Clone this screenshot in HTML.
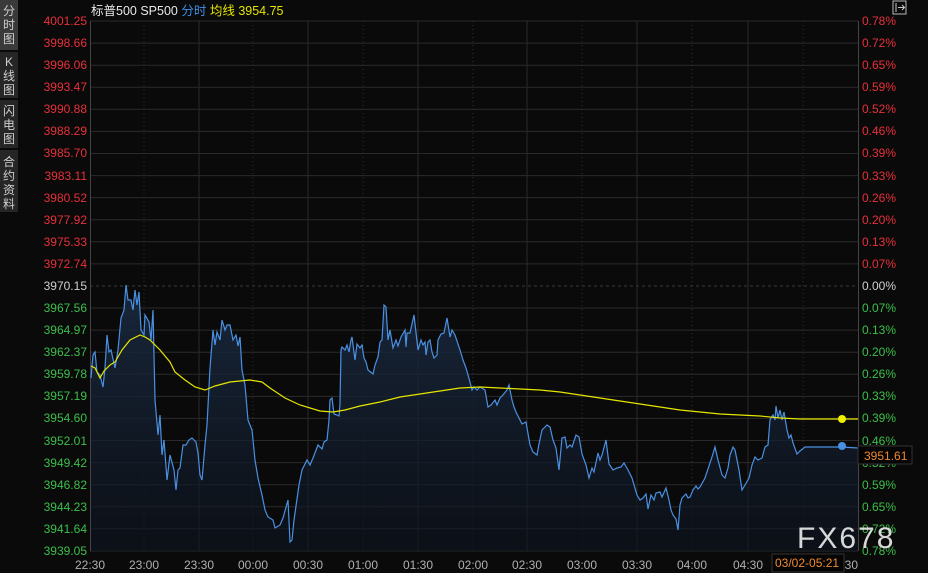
<!DOCTYPE html>
<html><head><meta charset="utf-8"><style>
html,body{margin:0;padding:0;background:#0a0a0a;width:928px;height:573px;overflow:hidden}
body{font-family:"Liberation Sans","Noto Sans CJK SC",sans-serif}
.sb{position:absolute;left:0;width:18px;background:#262626;color:#cfcfcf;font-size:12px;line-height:14px;text-align:center}
</style></head><body>
<div class="sb" style="top:0;height:50px;background:#3a3a3a;padding-top:4px;box-sizing:border-box">分<br>时<br>图</div>
<div class="sb" style="top:52px;height:46px;padding-top:3px;box-sizing:border-box">K<br>线<br>图</div>
<div class="sb" style="top:100px;height:48px;padding-top:4px;box-sizing:border-box">闪<br>电<br>图</div>
<div class="sb" style="top:150px;height:62px;padding-top:5px;box-sizing:border-box">合<br>约<br>资<br>料</div>
<svg width="928" height="573" style="position:absolute;left:0;top:0" font-family="Liberation Sans, Noto Sans CJK SC, sans-serif">
<defs><linearGradient id="g" x1="0" y1="0" x2="0" y2="1"><stop offset="0" stop-color="#1a2a40" stop-opacity="0.9"/><stop offset="1" stop-color="#0d1420" stop-opacity="0.6"/></linearGradient></defs>
<text x="91" y="15" font-size="12.5" fill="#e8e8e8">标普500 SP500 <tspan fill="#3d8fe6">分时</tspan> <tspan fill="#e6e600">均线  3954.75</tspan></text>
<rect x="893" y="1" width="13" height="13" fill="none" stroke="#bbb"/><path d="M896 3v9M898 7.5h6M902 5l2.5 2.5-2.5 2.5" stroke="#ccc" fill="none"/>
<g stroke="#2a2a2a" stroke-width="1">
<path d="M90 21H858M90 43.1H858M90 65.2H858M90 87.2H858M90 109.3H858M90 131.4H858M90 153.5H858M90 175.6H858M90 197.6H858M90 219.7H858M90 241.8H858M90 263.9H858M90 308H858M90 330.1H858M90 352.2H858M90 374.3H858M90 396.4H858M90 418.4H858M90 440.5H858M90 462.6H858M90 484.7H858M90 506.8H858M90 528.8H858M90 551H858"/>
<path d="M90 286H858" stroke-dasharray="3 3" stroke="#3a3a3a"/>
<path d="M199 21V551M308 21V551M418 21V551M527 21V551M637 21V551M748 21V551"/>
<path d="M144 21V551M253 21V551M363 21V551M473 21V551M582 21V551M692 21V551M803 21V551" stroke-dasharray="1 3" stroke="#333"/>
<path d="M90.5 21V551M858.5 21V551" stroke="#444"/>
</g>
<polygon fill="url(#g)" points="91,551 91,378 93,355 95,352 97,372 100,375 103,387 105,368 107,335 109,352 111,350 115,368 118,350 121,318 124,310 126,285 128,300 131,300 133,310 135,290 137,305 139,292 141,330 144,335 145,315 149,322 151,340 153,310 155,400 158,435 160,415 162,455 164,440 167,480 170,455 174,470 176,490 178,470 180,468 183,445 186,445 189,440 192,438 194,440 196,442 198,453 200,475 202,480 205,445 207,425 210,368 213,330 215,345 217,332 220,340 222,320 225,330 227,325 230,325 233,340 236,335 238,346 240,337 242,370 245,385 248,420 252,430 255,460 258,478 262,495 265,510 268,517 273,520 275,528 280,525 283,518 288,500 290,542 292,540 294,520 299,485 302,470 307,460 310,465 313,458 318,445 322,449 324,442 327,440 329,420 330,400 332,398 334,414 337,415 339,416 340,404 341,350 342,347 345,350 347,345 349,352 351,340 352,337 355,360 357,344 360,348 362,345 364,358 366,362 368,370 373,374 375,365 378,357 380,342 382,340 384,305 386,307 388,340 390,330 393,348 396,340 398,346 401,337 405,330 406,347 407,333 410,333 414,315 418,350 421,340 423,345 425,342 426,355 428,342 430,340 432,352 434,358 437,355 438,340 441,334 444,333 447,318 450,337 452,330 455,335 460,350 463,360 466,368 470,382 472,390 474,387 477,390 480,387 485,390 488,407 491,405 495,400 497,405 500,398 503,395 507,390 509,385 512,400 514,407 516,412 519,418 522,424 526,422 530,445 533,452 537,455 539,444 542,430 547,425 550,427 553,440 556,448 559,470 562,438 565,437 567,448 570,445 572,447 576,435 579,437 582,454 586,465 589,478 592,468 594,472 598,453 600,460 602,455 606,440 609,464 613,470 617,468 621,467 624,463 628,470 632,478 637,495 640,500 643,498 646,494 648,509 651,495 654,500 656,493 660,492 662,497 666,488 669,500 671,510 673,515 676,519 678,530 680,505 682,498 686,494 688,498 690,497 693,490 696,486 698,489 700,487 705,478 712,457 715,447 718,460 722,475 725,478 728,468 730,455 733,447 735,450 739,470 742,490 745,485 749,478 752,465 755,457 758,460 762,458 765,447 768,445 770,420 773,415 775,420 776,406 778,418 780,410 782,420 784,412 787,430 789,438 791,435 793,443 797,454 800,451 805,447 842,447 858,448 858,551"/>
<polyline fill="none" stroke="#4a90e2" stroke-width="1.2" points="91,378 93,355 95,352 97,372 100,375 103,387 105,368 107,335 109,352 111,350 115,368 118,350 121,318 124,310 126,285 128,300 131,300 133,310 135,290 137,305 139,292 141,330 144,335 145,315 149,322 151,340 153,310 155,400 158,435 160,415 162,455 164,440 167,480 170,455 174,470 176,490 178,470 180,468 183,445 186,445 189,440 192,438 194,440 196,442 198,453 200,475 202,480 205,445 207,425 210,368 213,330 215,345 217,332 220,340 222,320 225,330 227,325 230,325 233,340 236,335 238,346 240,337 242,370 245,385 248,420 252,430 255,460 258,478 262,495 265,510 268,517 273,520 275,528 280,525 283,518 288,500 290,542 292,540 294,520 299,485 302,470 307,460 310,465 313,458 318,445 322,449 324,442 327,440 329,420 330,400 332,398 334,414 337,415 339,416 340,404 341,350 342,347 345,350 347,345 349,352 351,340 352,337 355,360 357,344 360,348 362,345 364,358 366,362 368,370 373,374 375,365 378,357 380,342 382,340 384,305 386,307 388,340 390,330 393,348 396,340 398,346 401,337 405,330 406,347 407,333 410,333 414,315 418,350 421,340 423,345 425,342 426,355 428,342 430,340 432,352 434,358 437,355 438,340 441,334 444,333 447,318 450,337 452,330 455,335 460,350 463,360 466,368 470,382 472,390 474,387 477,390 480,387 485,390 488,407 491,405 495,400 497,405 500,398 503,395 507,390 509,385 512,400 514,407 516,412 519,418 522,424 526,422 530,445 533,452 537,455 539,444 542,430 547,425 550,427 553,440 556,448 559,470 562,438 565,437 567,448 570,445 572,447 576,435 579,437 582,454 586,465 589,478 592,468 594,472 598,453 600,460 602,455 606,440 609,464 613,470 617,468 621,467 624,463 628,470 632,478 637,495 640,500 643,498 646,494 648,509 651,495 654,500 656,493 660,492 662,497 666,488 669,500 671,510 673,515 676,519 678,530 680,505 682,498 686,494 688,498 690,497 693,490 696,486 698,489 700,487 705,478 712,457 715,447 718,460 722,475 725,478 728,468 730,455 733,447 735,450 739,470 742,490 745,485 749,478 752,465 755,457 758,460 762,458 765,447 768,445 770,420 773,415 775,420 776,406 778,418 780,410 782,420 784,412 787,430 789,438 791,435 793,443 797,454 800,451 805,447 842,447 858,448"/>
<polyline fill="none" stroke="#e6e600" stroke-width="1.2" points="91,366 95,368 100,378 104,371 110,365 115,362 122,350 130,340 140,335 145,337 150,340 160,350 170,362 175,372 185,380 195,387 205,390 215,386 230,382 250,380 262,382 270,388 285,398 300,405 320,411 333,412 345,410 360,406 380,402 400,397 420,394 440,391 460,388 480,387 500,388 520,389 540,390 560,392 580,395 600,398 620,401 640,404 660,407 680,410 700,412 720,414 740,415 760,416 780,418 800,419 858,419"/>
<circle cx="842" cy="419" r="4" fill="#f0f000"/><circle cx="842" cy="446" r="4" fill="#4a90e2"/>
<g font-size="12" text-anchor="end">
<g fill="#e8303a"><text x="87" y="25">4001.25</text><text x="87" y="47">3998.66</text><text x="87" y="69">3996.06</text><text x="87" y="91">3993.47</text><text x="87" y="113">3990.88</text><text x="87" y="135">3988.29</text><text x="87" y="157">3985.70</text><text x="87" y="180">3983.11</text><text x="87" y="202">3980.52</text><text x="87" y="224">3977.92</text><text x="87" y="246">3975.33</text><text x="87" y="268">3972.74</text></g>
<text x="87" y="290" fill="#cfcfcf">3970.15</text>
<g fill="#3cbf4a"><text x="87" y="312">3967.56</text><text x="87" y="334">3964.97</text><text x="87" y="356">3962.37</text><text x="87" y="378">3959.78</text><text x="87" y="400">3957.19</text><text x="87" y="422">3954.60</text><text x="87" y="445">3952.01</text><text x="87" y="467">3949.42</text><text x="87" y="489">3946.82</text><text x="87" y="511">3944.23</text><text x="87" y="533">3941.64</text><text x="87" y="555">3939.05</text></g>
</g>
<g font-size="12">
<g fill="#e8303a"><text x="862" y="25">0.78%</text><text x="862" y="47">0.72%</text><text x="862" y="69">0.65%</text><text x="862" y="91">0.59%</text><text x="862" y="113">0.52%</text><text x="862" y="135">0.46%</text><text x="862" y="157">0.39%</text><text x="862" y="180">0.33%</text><text x="862" y="202">0.26%</text><text x="862" y="224">0.20%</text><text x="862" y="246">0.13%</text><text x="862" y="268">0.07%</text></g>
<text x="862" y="290" fill="#cfcfcf">0.00%</text>
<g fill="#3cbf4a"><text x="862" y="312">0.07%</text><text x="862" y="334">0.13%</text><text x="862" y="356">0.20%</text><text x="862" y="378">0.26%</text><text x="862" y="400">0.33%</text><text x="862" y="422">0.39%</text><text x="862" y="445">0.46%</text><text x="862" y="467">0.52%</text><text x="862" y="489">0.59%</text><text x="862" y="511">0.65%</text><text x="862" y="533">0.72%</text><text x="862" y="555">0.78%</text></g>
</g>
<rect x="858" y="446" width="54" height="18" fill="#050505" stroke="#333"/>
<text x="864" y="460" font-size="12" fill="#f08a30">3951.61</text>
<text x="797" y="548" font-size="30" fill="#e8e8e8" letter-spacing="2" opacity="0.92">FX678</text>
<g font-size="12" fill="#b0b0b0" text-anchor="middle">
<text x="90" y="569">22:30</text><text x="144" y="569">23:00</text><text x="199" y="569">23:30</text><text x="253" y="569">00:00</text><text x="308" y="569">00:30</text><text x="363" y="569">01:00</text><text x="418" y="569">01:30</text><text x="473" y="569">02:00</text><text x="527" y="569">02:30</text><text x="582" y="569">03:00</text><text x="637" y="569">03:30</text><text x="692" y="569">04:00</text><text x="748" y="569">04:30</text><text x="843" y="569">05:30</text>
</g>
<rect x="772" y="554" width="72" height="18" fill="#050505" stroke="#333"/>
<text x="775" y="567" font-size="12" fill="#f08a30">03/02-05:21</text>
</svg>
</body></html>
